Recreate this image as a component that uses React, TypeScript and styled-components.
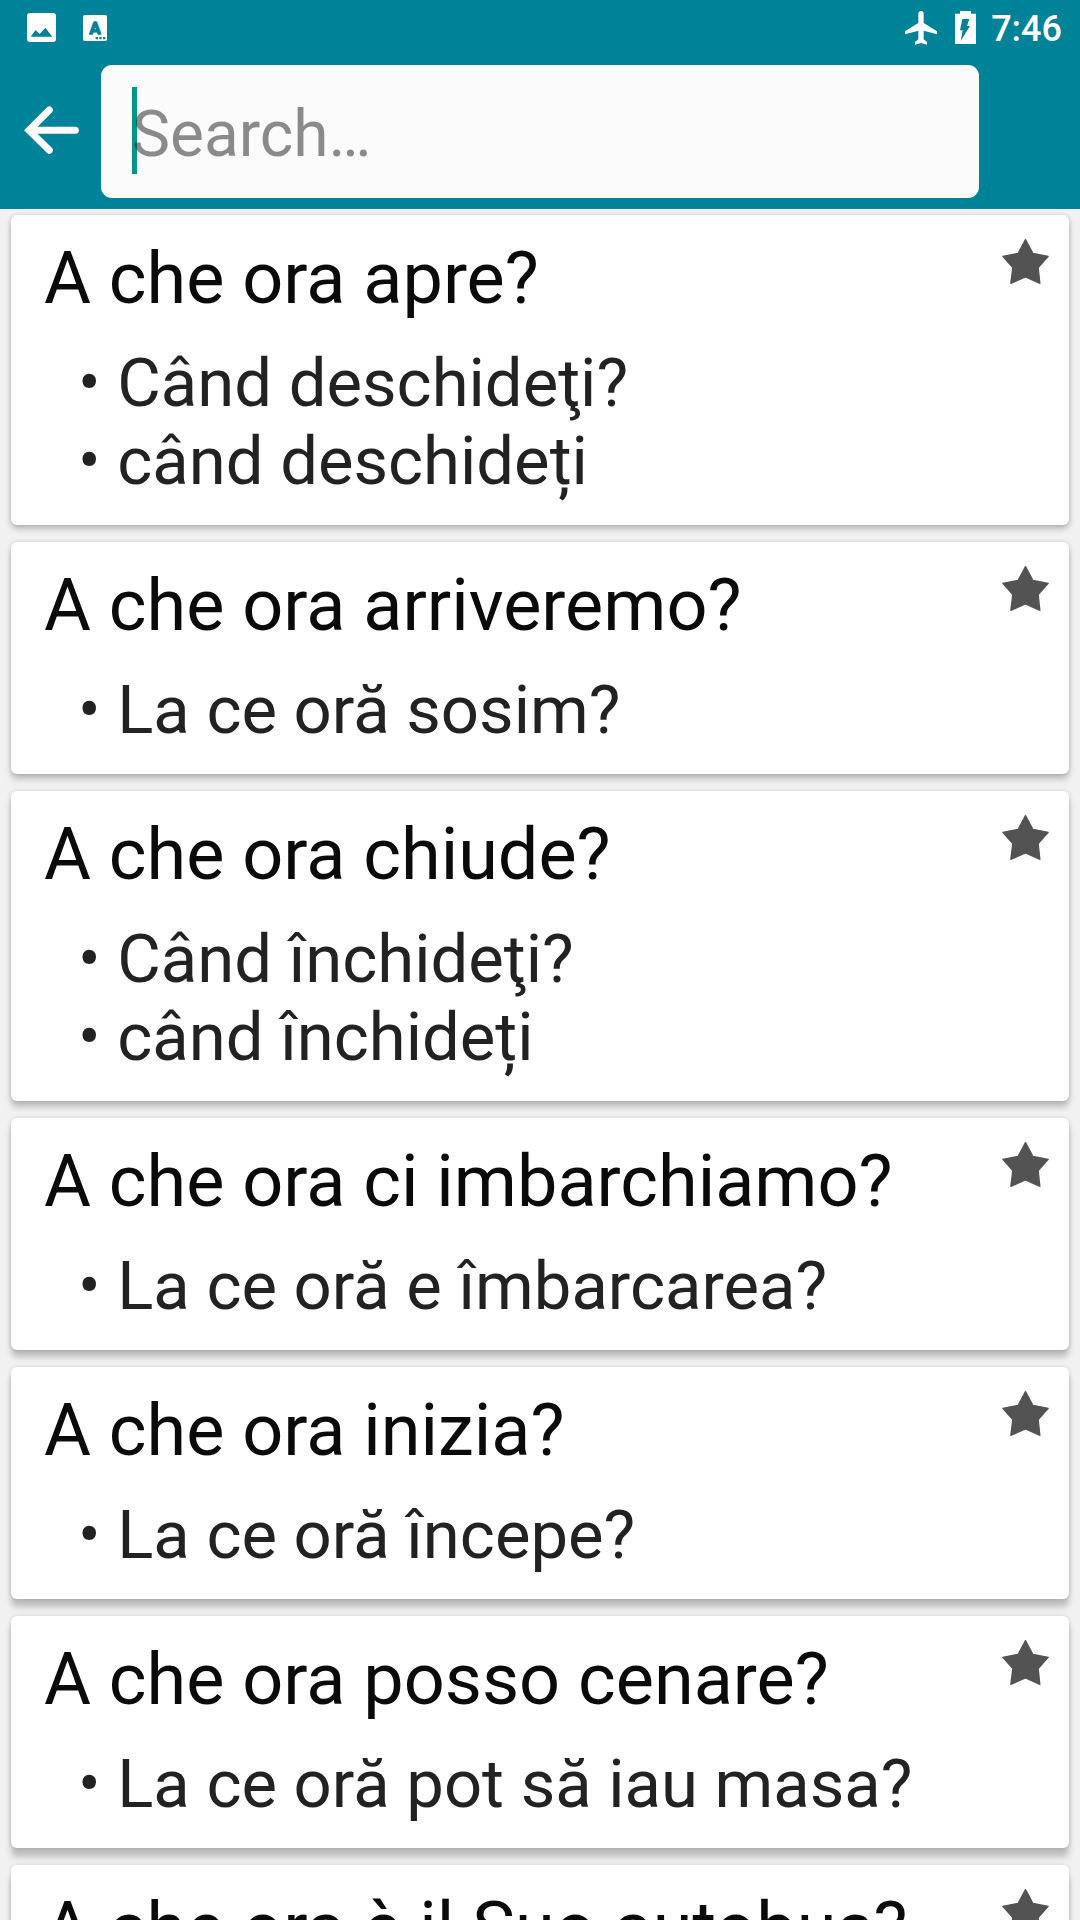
import React, { useState } from "react";
import styled, { createGlobalStyle } from "styled-components";

const teal = "#008299";

const GlobalStyle = createGlobalStyle`
  * { box-sizing: border-box; }
  html, body { margin: 0; background: #f1f1f1; }
  body { font-family: Roboto, "Noto Sans", sans-serif; }
  #root { height: 100vh; }
`;

const Screen = styled.div`
  height: 100%;
  display: flex;
  flex-direction: column;
  overflow: hidden;
`;

const Header = styled.header`
  flex: none;
  background: ${teal};
  color: #fff;
`;

const StatusBar = styled.div`
  display: flex;
  justify-content: space-between;
  align-items: center;
  height: 65px;
  padding: 0 18px 10px 27px;
`;

const StatusGroup = styled.div<{ $gap: number }>`
  display: flex;
  align-items: center;
  gap: ${(p) => p.$gap}px;
`;

const Clock = styled.time`
  padding-top: 2px;
  margin-left: -3px;
  font-size: 36px;
  line-height: 40px;
  font-weight: 500;
`;

const Toolbar = styled.div`
  display: flex;
  align-items: center;
  padding: 0 101px 11px 0;
`;

const BackButton = styled.button`
  flex: none;
  width: 101px;
  height: 133px;
  padding: 0 22px 3px 24px;
  border: 0;
  background: none;
  display: flex;
  align-items: center;
`;

const SearchBox = styled.label`
  position: relative;
  flex: 1;
  display: flex;
  align-items: center;
  height: 133px;
  padding: 0 31px;
  border-radius: 11px;
  background: #fbfbfb;
`;

const SearchInput = styled.input`
  position: relative;
  width: 100%;
  height: 87px;
  padding: 5px 0 0;
  border: 0;
  outline: 0;
  background: none;
  font: 400 64px/76px Roboto, "Noto Sans", sans-serif;
  color: #222;
  caret-color: transparent;
  &::placeholder {
    color: rgba(0, 0, 0, 0.45);
    opacity: 1;
  }
`;

const Cursor = styled.span`
  position: absolute;
  left: 31px;
  top: 22px;
  width: 5px;
  height: 87px;
  background: #009688;
`;

const CardList = styled.main`
  flex: 1;
  min-height: 0;
  overflow: hidden;
  display: flex;
  flex-direction: column;
  gap: 17px;
  padding: 6px 11px;
`;

const Card = styled.article<{ $depth: number }>`
  flex: none;
  display: flex;
  justify-content: space-between;
  align-items: flex-start;
  padding: 22px 20px 25px 33px;
  border-radius: 6px;
  background: #fff;
  box-shadow:
    0 ${(p) => p.$depth}px 6px rgba(0, 0, 0, 0.22),
    0 0 4px rgba(0, 0, 0, 0.14);
`;

const Phrase = styled.h2`
  margin: 0 0 23px;
  font-size: 72px;
  line-height: 84px;
  font-weight: 400;
  color: #0a0a0a;
  white-space: nowrap;
`;

const Translations = styled.ul`
  margin: 0;
  padding: 0 0 0 34px;
  list-style: none;
`;

const Translation = styled.li`
  font-size: 67px;
  line-height: 78px;
  color: #222;
  white-space: nowrap;
  &::before {
    content: "• ";
  }
`;

const StarButton = styled.button`
  flex: none;
  display: flex;
  padding: 2px 0 0;
  border: 0;
  background: none;
`;

const entries = [
  { phrase: "A che ora apre?", translations: ["Când deschideţi?", "când deschideți"] },
  { phrase: "A che ora arriveremo?", translations: ["La ce oră sosim?"] },
  { phrase: "A che ora chiude?", translations: ["Când închideţi?", "când închideți"] },
  { phrase: "A che ora ci imbarchiamo?", translations: ["La ce oră e îmbarcarea?"] },
  { phrase: "A che ora inizia?", translations: ["La ce oră începe?"] },
  { phrase: "A che ora posso cenare?", translations: ["La ce oră pot să iau masa?"] },
  { phrase: "A che ora è il Suo autobus?", translations: [] },
];

const PictureIcon = () => (
  <svg width="29" height="29" viewBox="0 0 87 87" aria-hidden="true">
    <rect width="87" height="87" rx="9" fill="#fff" />
    <path d="M11 71 26 51 38 63 55 44 76 71Z" fill={teal} />
  </svg>
);

const LanguageIcon = () => (
  <svg width="24" height="26" viewBox="0 0 72 78" aria-hidden="true">
    <rect width="72" height="78" rx="5" fill="#fff" />
    <text x="36" y="56" textAnchor="middle" fontFamily="Roboto, sans-serif" fontWeight="700" fontSize="50" fill={teal} stroke={teal} strokeWidth="4" strokeLinejoin="round">A</text>
    <path d="M38 66h7v7h-7zM49 66h7v7h-7zM60 66h7v7h-7z" fill={teal} />
  </svg>
);

const PlaneIcon = () => (
  <svg width="32" height="34" viewBox="0 0 96 102" aria-hidden="true">
    <path d="M48 0c5 0 8 4 8 9v27l40 25v9L56 59v26l10 8v8l-18-5-18 5v-8l10-8V59L0 70v-9l40-25V9c0-5 3-9 8-9Z" fill="#fff" />
  </svg>
);

const BatteryIcon = () => (
  <svg width="21" height="33" viewBox="0 0 63 99" aria-hidden="true">
    <path d="M15 0h33v8h15v91H0V8h15Z" fill="#fff" />
    <path d="M22 24h21l-7 21h9L17 90l6-32h-8Z" fill={teal} />
  </svg>
);

const BackIcon = () => (
  <svg width="55" height="48" viewBox="0 0 165 144" fill="none" stroke="#fff" strokeWidth="21" strokeLinecap="round" aria-hidden="true">
    <path d="M76 12 15 73l61 60" />
    <path d="M28 73h126" />
  </svg>
);

const StarIcon = () => (
  <svg width="47" height="45" viewBox="0 0 140 135" aria-hidden="true">
    <path d="M70 2 92 43 138 52 108 86 113 133 70 114 26 133 32 86 2 52 48 43Z" fill="#535353" stroke="#535353" strokeWidth="4" strokeLinejoin="round" />
  </svg>
);

export default function App() {
  const [query, setQuery] = useState("");

  return (
    <Screen>
      <GlobalStyle />
      <Header>
        <StatusBar>
          <StatusGroup $gap={27}>
            <PictureIcon />
            <LanguageIcon />
          </StatusGroup>
          <StatusGroup $gap={18}>
            <PlaneIcon />
            <BatteryIcon />
            <Clock>7:46</Clock>
          </StatusGroup>
        </StatusBar>
        <Toolbar>
          <BackButton aria-label="Back">
            <BackIcon />
          </BackButton>
          <SearchBox>
            {query === "" && <Cursor />}
            <SearchInput
              type="text"
              aria-label="Search"
              placeholder="Search…"
              value={query}
              onChange={(e) => setQuery(e.target.value)}
            />
          </SearchBox>
        </Toolbar>
      </Header>
      <CardList>
        {entries.map((entry, index) => (
          <Card key={entry.phrase} $depth={4 + index}>
            <div>
              <Phrase>{entry.phrase}</Phrase>
              <Translations>
                {entry.translations.map((text) => (
                  <Translation key={text}>{text}</Translation>
                ))}
              </Translations>
            </div>
            <StarButton aria-label="Add to favourites">
              <StarIcon />
            </StarButton>
          </Card>
        ))}
      </CardList>
    </Screen>
  );
}
